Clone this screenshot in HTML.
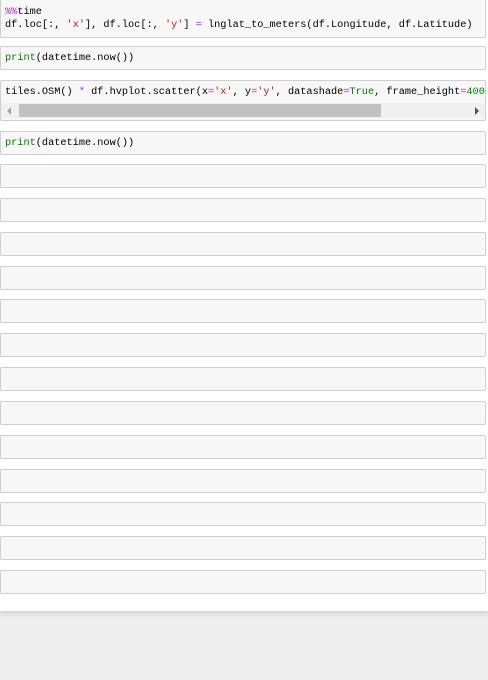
<!DOCTYPE html>
<html><head><style>
html,body{margin:0;padding:0;width:488px;height:680px;background:#eee;overflow:hidden;position:relative}
.page{position:absolute;left:0;top:0;width:488px;height:611px;background:#fff;box-shadow:0 2px 6px rgba(0,0,0,.15)}
.c{position:absolute;left:0;width:486px;background:#f7f7f7;border:1px solid #cfcfcf;border-radius:2px;box-sizing:border-box;font-family:"Liberation Mono",monospace;font-size:10.25px;color:#000;white-space:pre;overflow:hidden}
.c .t{position:absolute;left:4px;line-height:12px}
.m{color:#aa22ff}.s{color:#ba2121}.o{color:#aa22ff}.b{color:#008000}.k{color:#008000}.n{color:#080}
</style></head><body>
<div class="page">
<div class="c" style="top:-2px;height:40px"><div class="t" style="top:7px;line-height:12.5px"><span class="m">%%</span>time
df.loc[:, <span class="s">'x'</span>], df.loc[:, <span class="s">'y'</span>] <span class="o">=</span> lnglat_to_meters(df.Longitude, df.Latitude)</div></div>
<div class="c" style="top:46px;height:24px"><div class="t" style="top:5px"><span class="b">print</span>(datetime.now())</div></div>
<div class="c" style="top:80px;height:41px"><div class="t" style="top:5px">tiles.OSM() <span class="o">*</span> df.hvplot.scatter(x<span class="o">=</span><span class="s">'x'</span>, y<span class="o">=</span><span class="s">'y'</span>, datashade<span class="o">=</span><span class="k">True</span>, frame_height<span class="o">=</span><span class="n">400</span></div>
<div style="position:absolute;left:0;top:22px;width:486px;height:15px;background:#f0f0f0"></div>
<div style="position:absolute;left:18px;top:23px;width:362px;height:13px;background:#c1c1c1"></div>
<div style="position:absolute;left:6px;top:26px;width:0;height:0;border-top:4px solid transparent;border-bottom:4px solid transparent;border-right:4px solid #a3a3a3"></div>
<div style="position:absolute;left:474px;top:26px;width:0;height:0;border-top:4px solid transparent;border-bottom:4px solid transparent;border-left:4px solid #505050"></div>
</div>
<div class="c" style="top:131px;height:24px"><div class="t" style="top:5px"><span class="b">print</span>(datetime.now())</div></div>
<div class="c" style="top:164px;height:24px"></div>
<div class="c" style="top:198px;height:24px"></div>
<div class="c" style="top:232px;height:24px"></div>
<div class="c" style="top:266px;height:24px"></div>
<div class="c" style="top:299px;height:24px"></div>
<div class="c" style="top:333px;height:24px"></div>
<div class="c" style="top:367px;height:24px"></div>
<div class="c" style="top:401px;height:24px"></div>
<div class="c" style="top:435px;height:24px"></div>
<div class="c" style="top:469px;height:24px"></div>
<div class="c" style="top:502px;height:24px"></div>
<div class="c" style="top:536px;height:24px"></div>
<div class="c" style="top:570px;height:24px"></div>
</div>
</body></html>
